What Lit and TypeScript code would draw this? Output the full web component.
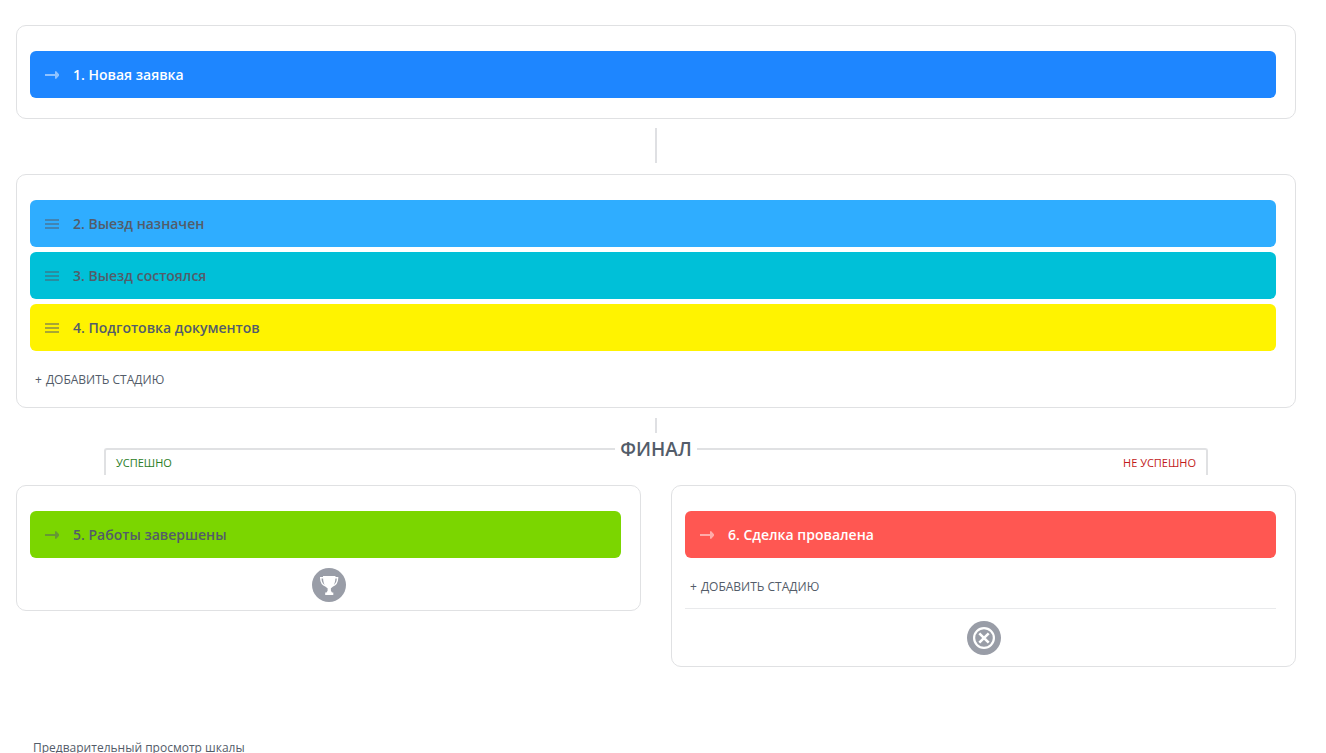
import { LitElement, html, css, svg, nothing } from "lit";
import { customElement, property } from "lit/decorators.js";

type Tone = "light" | "dark";
type Mark = "arrow" | "drag";

interface Stage {
  name: string;
  color: string;
  tone: Tone;
  mark: Mark;
}

const initial: Stage[] = [
  { name: "1. Новая заявка", color: "#1e86ff", tone: "light", mark: "arrow" },
];

const progress: Stage[] = [
  { name: "2. Выезд назначен", color: "#2fadff", tone: "dark", mark: "drag" },
  { name: "3. Выезд состоялся", color: "#00c0d8", tone: "dark", mark: "drag" },
  { name: "4. Подготовка документов", color: "#fff300", tone: "dark", mark: "drag" },
];

const won: Stage[] = [
  { name: "5. Работы завершены", color: "#7bd600", tone: "dark", mark: "arrow" },
];

const lost: Stage[] = [
  { name: "6. Сделка провалена", color: "#ff5752", tone: "light", mark: "arrow" },
];

@customElement("stage-panel")
export class StagePanel extends LitElement {
  @property({ attribute: false }) stages: Stage[] = [];
  @property({ type: Boolean }) addable = false;
  @property() result: "" | "won" | "lost" = "";

  static styles = css`
    :host {
      display: block;
      box-sizing: border-box;
      border: 1px solid #e0e1e3;
      border-radius: 10px;
      padding-top: 25px;
    }
    .body {
      margin: 0 19px 0 13px;
    }
    .plain {
      padding-bottom: 20px;
    }
    .list {
      display: flex;
      flex-direction: column;
      gap: 5px;
      list-style: none;
      margin: 0;
      padding: 0;
    }
    .stage {
      display: flex;
      align-items: center;
      gap: 14px;
      height: 47px;
      padding: 0 15px;
      border-radius: 6px;
      box-sizing: border-box;
      font-size: 14px;
      line-height: 19px;
      font-weight: 600;
      color: #535c69;
    }
    .stage.light {
      color: #fff;
    }
    .mark {
      width: 14px;
      height: 13px;
      flex: none;
      opacity: 0.5;
    }
    .add {
      display: flex;
      gap: 4px;
      margin: 19px 0 0 5px;
      padding: 0;
      border: 0;
      background: none;
      font: inherit;
      font-size: 12px;
      line-height: 20px;
      color: #535c69;
      text-transform: uppercase;
      cursor: pointer;
    }
    .adding {
      padding-bottom: 17px;
    }
    .ruled {
      padding-bottom: 11px;
      border-bottom: 1px solid #e9eaec;
    }
    .result {
      display: flex;
      justify-content: center;
      padding: 10px 0 8px;
    }
    .result.lost {
      padding: 12px 0 11px;
    }
    .badge {
      display: block;
      width: 34px;
      height: 34px;
    }
  `;

  private mark(kind: Mark) {
    return kind === "arrow"
      ? svg`<svg class="mark" viewBox="0 0 14 13" aria-hidden="true"><path fill="currentColor" d="M0 6h10V3.200l1.300 0L14.600 7l-3.300 3.800H10V8H0z"/></svg>`
      : svg`<svg class="mark" viewBox="0 0 14 13" aria-hidden="true"><path fill="currentColor" d="M0 2h14v2H0zM0 6h14v2H0zM0 10h14v2H0z"/></svg>`;
  }

  private badge() {
    return this.result === "won"
      ? html`<svg class="badge" viewBox="0 0 34 34" role="img" aria-label="Успешно">
          <circle cx="17" cy="17" r="17" fill="#999da7" />
          <path fill="#fff" d="M11 8h12.500c0 6.500-1.500 10.400-4.600 12.200v2.600l1.100 1.700h1.300V27h-8.100v-2.500h1.300l1.100-1.700v-2.600C12.500 18.400 11 14.500 11 8z" />
          <path fill="none" stroke="#fff" stroke-width="1.400" d="M11.500 9.700H8.700c.1 4.300 1.800 7.300 5.200 8.300M23 9.700h2.600c-.1 4.300-1.800 7.300-5.200 8.300" />
        </svg>`
      : html`<svg class="badge" viewBox="0 0 34 34" role="img" aria-label="Не успешно">
          <circle cx="17" cy="17" r="17" fill="#999da7" />
          <circle cx="17" cy="17" r="9.900" fill="none" stroke="#fff" stroke-width="2.200" />
          <path fill="none" stroke="#fff" stroke-width="2.600" d="M12.300 12.300l9.400 9.400M21.700 12.300l-9.400 9.400" />
        </svg>`;
  }

  render() {
    const foot = this.addable ? (this.result ? "ruled" : "adding") : this.result ? "" : "plain";
    return html`
      <div class="body ${foot}">
        <ul class="list">
          ${this.stages.map(
            (s) => html`<li class="stage ${s.tone}" style="background:${s.color}">
              ${this.mark(s.mark)}<span>${s.name}</span>
            </li>`
          )}
        </ul>
        ${this.addable
          ? html`<button class="add" type="button"><span>+</span><span>Добавить стадию</span></button>`
          : nothing}
      </div>
      ${this.result ? html`<div class="result ${this.result}">${this.badge()}</div>` : nothing}
    `;
  }
}

@customElement("app-root")
export class AppRoot extends LitElement {
  static styles = css`
    :host {
      display: block;
      box-sizing: border-box;
      height: 100vh;
      overflow: hidden;
      padding: 25px 30px 0 16px;
      background: #fff;
      font-family: "Open Sans", "Noto Sans", sans-serif;
      color: #535c69;
    }
    .link {
      width: 2px;
      height: 35px;
      margin: 9px auto 11px;
      background: #dfe0e3;
    }
    .link.short {
      height: 15px;
      margin: 10px auto 0;
    }
    .final {
      display: grid;
      grid-template-columns: 1fr auto 1fr;
      margin: 0 88px 10px;
    }
    .title {
      margin: 0;
      padding: 0 5px;
      font-size: 19px;
      line-height: 32px;
      font-weight: 600;
    }
    .arm {
      box-sizing: border-box;
      height: 27px;
      margin-top: 15px;
      padding: 5px 10px 0;
      border-top: 2px solid #e0e1e3;
      font-size: 11px;
      line-height: 16px;
      font-weight: 500;
      text-transform: uppercase;
    }
    .arm.good {
      border-left: 2px solid #e0e1e3;
      border-top-left-radius: 3px;
      color: #2a7d26;
    }
    .arm.bad {
      border-right: 2px solid #e0e1e3;
      border-top-right-radius: 3px;
      color: #c21b1b;
      text-align: right;
    }
    .results {
      display: grid;
      grid-template-columns: 1fr 1fr;
      align-items: start;
      gap: 30px;
    }
    .preview {
      margin: 71px 17px 0;
      font-size: 12px;
      line-height: 20px;
      font-weight: 400;
    }
  `;

  render() {
    return html`
      <main>
        <stage-panel .stages=${initial}></stage-panel>
        <div class="link"></div>
        <stage-panel .stages=${progress} addable></stage-panel>
        <div class="link short"></div>
        <div class="final">
          <div class="arm good">Успешно</div>
          <h2 class="title">ФИНАЛ</h2>
          <div class="arm bad">Не успешно</div>
        </div>
        <div class="results">
          <stage-panel .stages=${won} result="won"></stage-panel>
          <stage-panel .stages=${lost} addable result="lost"></stage-panel>
        </div>
        <h3 class="preview">Предварительный просмотр шкалы</h3>
      </main>
    `;
  }
}
